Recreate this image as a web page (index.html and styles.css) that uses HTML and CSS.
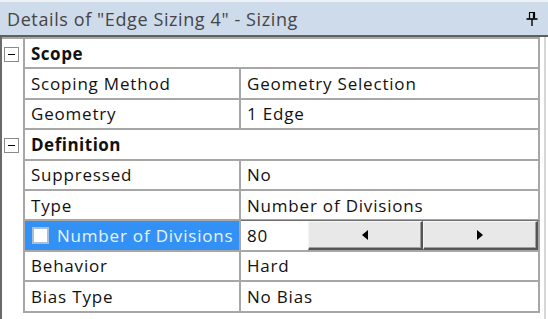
FILE: index.html
```html
<!DOCTYPE html>
<html>
<head>
<meta charset="utf-8">
<link rel="stylesheet" href="styles.css">
</head>
<body>
<div class="window">
  <div class="titlebar">
    <span class="title">Details of "Edge Sizing 4" - Sizing</span>
    <svg class="pin" width="12" height="16" viewBox="0 0 12 16">
      <path d="M3 1.5h6M3.5 1.5v6M8.5 1.5v6M7.5 1.5v6" stroke="#000" stroke-width="1.2" fill="none"/>
      <path d="M0.5 8h11" stroke="#000" stroke-width="1.6"/>
      <path d="M6 8v7" stroke="#000" stroke-width="1.4"/>
    </svg>
  </div>
  <div class="panel">
    <div class="grid">
      <div class="row header">
        <div class="gutter"><span class="toggle"></span></div>
        <div class="cell span">Scope</div>
      </div>
      <div class="row">
        <div class="gutter"></div>
        <div class="cell name">Scoping Method</div>
        <div class="cell value">Geometry Selection</div>
      </div>
      <div class="row">
        <div class="gutter"></div>
        <div class="cell name">Geometry</div>
        <div class="cell value">1 Edge</div>
      </div>
      <div class="row header">
        <div class="gutter"><span class="toggle"></span></div>
        <div class="cell span">Definition</div>
      </div>
      <div class="row">
        <div class="gutter"></div>
        <div class="cell name">Suppressed</div>
        <div class="cell value">No</div>
      </div>
      <div class="row">
        <div class="gutter"></div>
        <div class="cell name">Type</div>
        <div class="cell value">Number of Divisions</div>
      </div>
      <div class="row selected">
        <div class="gutter"></div>
        <div class="cell name sel"><span class="check"></span>Number of Divisions</div>
        <div class="cell value editor">
          <span class="input">80</span>
          <span class="btn"><span class="arrow left"></span></span>
          <span class="btn"><span class="arrow right"></span></span>
        </div>
      </div>
      <div class="row">
        <div class="gutter"></div>
        <div class="cell name">Behavior</div>
        <div class="cell value">Hard</div>
      </div>
      <div class="row">
        <div class="gutter"></div>
        <div class="cell name">Bias Type</div>
        <div class="cell value">No Bias</div>
      </div>
    </div>
    <div class="scrolledge"></div>
  </div>
</div>
</body>
</html>
```

FILE: styles.css
```css
html, body {
  margin: 0;
  padding: 0;
  background: #ffffff;
}
body {
  width: 548px;
  height: 319px;
  overflow: hidden;
  font-family: "Open Sans", "Noto Sans", sans-serif;
  font-size: 17px;
  letter-spacing: 0.8px;
  color: #111;
}
.window {
  display: flex;
  flex-direction: column;
  height: 319px;
}
.titlebar {
  height: 33px;
  border-top: 2px solid #eef2f6;
  border-bottom: 2px solid #5f5f5f;
  background: #cddbea;
  display: flex;
  align-items: center;
  justify-content: space-between;
  padding: 0 10px 0 7px;
}
.title {
  color: #454545;
  font-size: 18px;
  letter-spacing: 0.6px;
}
.pin {
  margin-top: 1px;
}
.panel {
  flex: 1;
  display: flex;
  border-left: 2px solid #6a6a6a;
}
.grid {
  width: 538px;
  border-top: 2px solid #a7a7a7;
  display: flex;
  flex-direction: column;
  align-self: flex-start;
}
.row {
  display: flex;
  height: 30.4px;
}
.gutter {
  width: 21px;
  border-right: 2px solid #a7a7a7;
  display: flex;
  align-items: center;
  justify-content: center;
}
.toggle {
  width: 13px;
  height: 13px;
  border: 1px solid #8a8a8a;
  background: #fff;
  position: relative;
  margin-right: 3px;
}
.toggle::after {
  content: "";
  position: absolute;
  left: 3px;
  right: 3px;
  top: 6px;
  height: 1px;
  background: #000;
}
.cell {
  display: flex;
  align-items: center;
  border-bottom: 2px solid #a7a7a7;
  box-sizing: border-box;
  height: 100%;
}
.span {
  flex: 1;
  padding-left: 6px;
  font-weight: bold;
  letter-spacing: 0.5px;
  border-right: 2px solid #a7a7a7;
}
.name {
  width: 216px;
  padding-left: 6px;
  border-right: 2px solid #a7a7a7;
}
.value {
  flex: 1;
  padding-left: 6px;
  border-right: 2px solid #a7a7a7;
}
.sel {
  background: #3391f5;
  color: #e8f3ff;
  padding-left: 7px;
}
.check {
  width: 17px;
  height: 17px;
  background: #fff;
  border: 2px solid #a9bfd8;
  box-sizing: border-box;
  margin-right: 8px;
}
.editor {
  padding-left: 0;
  align-items: stretch;
  border-top: 1px solid #707070;
  margin-top: -1px;
  height: calc(100% + 1px);
}
.input {
  width: 61px;
  padding-left: 6px;
  display: flex;
  align-items: center;
  background: #fff;
}
.btn {
  flex: 1;
  display: flex;
  align-items: center;
  justify-content: center;
  background: #e8e8e8;
  border-top: 1px solid #f8f8f8;
  border-left: 1px solid #f4f4f4;
  border-right: 2px solid #555;
  border-bottom: 2px solid #555;
  box-shadow: inset -1px -1px 0 #a0a0a0;
}
.arrow {
  width: 0;
  height: 0;
  border-top: 5px solid transparent;
  border-bottom: 5px solid transparent;
}
.arrow.left {
  border-right: 6px solid #000;
}
.arrow.right {
  border-left: 6px solid #000;
}
.scrolledge {
  width: 2px;
  margin-left: 4px;
  background: #d6d6d6;
}
```
